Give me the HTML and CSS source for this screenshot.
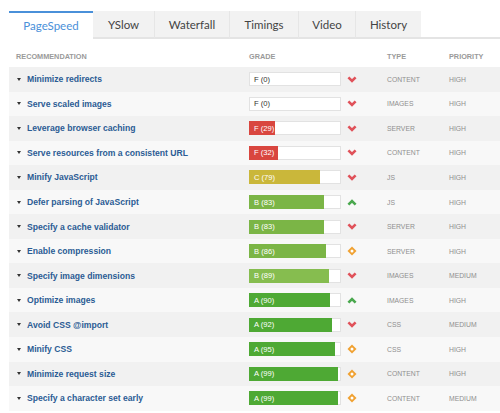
FILE: index.html
```html
<!DOCTYPE html>
<html>
<head>
<meta charset="utf-8">
<link rel="stylesheet" href="styles.css">
</head>
<body>
<div class="page">
  <div class="tabs">
    <div class="tab active" style="width:84px">PageSpeed</div>
    <div class="tab" style="width:61px">YSlow</div>
    <div class="tab" style="width:75px">Waterfall</div>
    <div class="tab" style="width:69px">Timings</div>
    <div class="tab" style="width:57px">Video</div>
    <div class="tab" style="width:66px">History</div>
    <div class="tab-fill"></div>
  </div>
  <div class="table">
    <div class="head">
      <div class="h h-rec">RECOMMENDATION</div>
      <div class="h">GRADE</div>
      <div class="h"></div>
      <div class="h">TYPE</div>
      <div class="h">PRIORITY</div>
    </div>

    <div class="row">
      <div class="name"><span class="tri"></span>Minimize redirects</div>
      <div class="grade"><div class="bar"><div class="fill" style="width:0%"></div><span class="gtext dark">F (0)</span></div></div>
      <div class="ic"><svg class="down" width="10" height="7" viewBox="0 0 10 7"><polyline points="1.4,1.4 5,5 8.6,1.4"/></svg></div>
      <div class="type">CONTENT</div>
      <div class="prio">HIGH</div>
    </div>
    <div class="row">
      <div class="name"><span class="tri"></span>Serve scaled images</div>
      <div class="grade"><div class="bar"><div class="fill" style="width:0%"></div><span class="gtext dark">F (0)</span></div></div>
      <div class="ic"><svg class="down" width="10" height="7" viewBox="0 0 10 7"><polyline points="1.4,1.4 5,5 8.6,1.4"/></svg></div>
      <div class="type">IMAGES</div>
      <div class="prio">HIGH</div>
    </div>
    <div class="row">
      <div class="name"><span class="tri"></span>Leverage browser caching</div>
      <div class="grade"><div class="bar"><div class="fill red" style="width:29%"></div><span class="gtext">F (29)</span></div></div>
      <div class="ic"><svg class="down" width="10" height="7" viewBox="0 0 10 7"><polyline points="1.4,1.4 5,5 8.6,1.4"/></svg></div>
      <div class="type">SERVER</div>
      <div class="prio">HIGH</div>
    </div>
    <div class="row">
      <div class="name"><span class="tri"></span>Serve resources from a consistent URL</div>
      <div class="grade"><div class="bar"><div class="fill red" style="width:32%"></div><span class="gtext">F (32)</span></div></div>
      <div class="ic"><svg class="down" width="10" height="7" viewBox="0 0 10 7"><polyline points="1.4,1.4 5,5 8.6,1.4"/></svg></div>
      <div class="type">CONTENT</div>
      <div class="prio">HIGH</div>
    </div>
    <div class="row">
      <div class="name"><span class="tri"></span>Minify JavaScript</div>
      <div class="grade"><div class="bar"><div class="fill yellow" style="width:79%"></div><span class="gtext">C (79)</span></div></div>
      <div class="ic"><svg class="down" width="10" height="7" viewBox="0 0 10 7"><polyline points="1.4,1.4 5,5 8.6,1.4"/></svg></div>
      <div class="type">JS</div>
      <div class="prio">HIGH</div>
    </div>
    <div class="row">
      <div class="name"><span class="tri"></span>Defer parsing of JavaScript</div>
      <div class="grade"><div class="bar"><div class="fill green-b" style="width:83%"></div><span class="gtext">B (83)</span></div></div>
      <div class="ic"><svg class="up" width="10" height="7" viewBox="0 0 10 7"><polyline points="1.4,5.6 5,2 8.6,5.6"/></svg></div>
      <div class="type">JS</div>
      <div class="prio">HIGH</div>
    </div>
    <div class="row">
      <div class="name"><span class="tri"></span>Specify a cache validator</div>
      <div class="grade"><div class="bar"><div class="fill green-b" style="width:83%"></div><span class="gtext">B (83)</span></div></div>
      <div class="ic"><svg class="down" width="10" height="7" viewBox="0 0 10 7"><polyline points="1.4,1.4 5,5 8.6,1.4"/></svg></div>
      <div class="type">SERVER</div>
      <div class="prio">HIGH</div>
    </div>
    <div class="row">
      <div class="name"><span class="tri"></span>Enable compression</div>
      <div class="grade"><div class="bar"><div class="fill green-b" style="width:86%"></div><span class="gtext">B (86)</span></div></div>
      <div class="ic"><svg class="dia" width="10" height="10" viewBox="0 0 10 10"><polygon points="5,0.5 9.5,5 5,9.5 0.5,5"/><circle cx="5" cy="5" r="1.5"/></svg></div>
      <div class="type">SERVER</div>
      <div class="prio">HIGH</div>
    </div>
    <div class="row">
      <div class="name"><span class="tri"></span>Specify image dimensions</div>
      <div class="grade"><div class="bar"><div class="fill green-b2" style="width:89%"></div><span class="gtext">B (89)</span></div></div>
      <div class="ic"><svg class="down" width="10" height="7" viewBox="0 0 10 7"><polyline points="1.4,1.4 5,5 8.6,1.4"/></svg></div>
      <div class="type">IMAGES</div>
      <div class="prio">MEDIUM</div>
    </div>
    <div class="row">
      <div class="name"><span class="tri"></span>Optimize images</div>
      <div class="grade"><div class="bar"><div class="fill green-a" style="width:90%"></div><span class="gtext">A (90)</span></div></div>
      <div class="ic"><svg class="up" width="10" height="7" viewBox="0 0 10 7"><polyline points="1.4,5.6 5,2 8.6,5.6"/></svg></div>
      <div class="type">IMAGES</div>
      <div class="prio">HIGH</div>
    </div>
    <div class="row">
      <div class="name"><span class="tri"></span>Avoid CSS @import</div>
      <div class="grade"><div class="bar"><div class="fill green-a" style="width:92%"></div><span class="gtext">A (92)</span></div></div>
      <div class="ic"><svg class="down" width="10" height="7" viewBox="0 0 10 7"><polyline points="1.4,1.4 5,5 8.6,1.4"/></svg></div>
      <div class="type">CSS</div>
      <div class="prio">MEDIUM</div>
    </div>
    <div class="row">
      <div class="name"><span class="tri"></span>Minify CSS</div>
      <div class="grade"><div class="bar"><div class="fill green-a" style="width:95%"></div><span class="gtext">A (95)</span></div></div>
      <div class="ic"><svg class="dia" width="10" height="10" viewBox="0 0 10 10"><polygon points="5,0.5 9.5,5 5,9.5 0.5,5"/><circle cx="5" cy="5" r="1.5"/></svg></div>
      <div class="type">CSS</div>
      <div class="prio">HIGH</div>
    </div>
    <div class="row">
      <div class="name"><span class="tri"></span>Minimize request size</div>
      <div class="grade"><div class="bar"><div class="fill green-a" style="width:99%"></div><span class="gtext">A (99)</span></div></div>
      <div class="ic"><svg class="dia" width="10" height="10" viewBox="0 0 10 10"><polygon points="5,0.5 9.5,5 5,9.5 0.5,5"/><circle cx="5" cy="5" r="1.5"/></svg></div>
      <div class="type">CONTENT</div>
      <div class="prio">HIGH</div>
    </div>
    <div class="row">
      <div class="name"><span class="tri"></span>Specify a character set early</div>
      <div class="grade"><div class="bar"><div class="fill green-a" style="width:99%"></div><span class="gtext">A (99)</span></div></div>
      <div class="ic"><svg class="dia" width="10" height="10" viewBox="0 0 10 10"><polygon points="5,0.5 9.5,5 5,9.5 0.5,5"/><circle cx="5" cy="5" r="1.5"/></svg></div>
      <div class="type">CONTENT</div>
      <div class="prio">MEDIUM</div>
    </div>
  </div>
</div>
</body>
</html>
```

FILE: styles.css
```css
html, body {
  margin: 0;
  padding: 0;
  background: #ffffff;
}
.page {
  padding: 11px 0 0 9px;
  font-family: "Liberation Sans", Arial, sans-serif;
}
.tabs {
  display: flex;
  height: 28px;
}
.tab {
  box-sizing: border-box;
  height: 28px;
  background: #f2f2f2;
  border-left: 1px solid #e6e6e6;
  border-bottom: 2px solid #e4e4e4;
  display: flex;
  align-items: center;
  justify-content: center;
  font-family: Lato, "Open Sans", sans-serif;
  font-size: 11.5px;
  color: #444444;
}
.tab.active {
  background: #ffffff;
  border-left: none;
  border-top: 2px solid #4a90d9;
  border-bottom: 2px solid #ffffff;
  color: #4a90d9;
}
.tab.active + .tab {
  border-left: none;
}
.tab-fill {
  flex: 1;
  border-bottom: 2px solid #e4e4e4;
}
.head, .row {
  display: grid;
  grid-template-columns: 240px 98px 40px 62px 1fr;
  align-items: center;
}
.head {
  padding: 13px 0 5px;
  line-height: 10px;
}
.h {
  font-size: 7.3px;
  font-weight: bold;
  color: #9a9a9a;
}
.h-rec {
  padding-left: 7px;
}
.row {
  height: 24.55px;
  background: #f1f1f1;
}
.row:nth-child(odd) {
  background: #f8f8f8;
}
.name {
  display: flex;
  align-items: center;
  padding-left: 8px;
  font-size: 8.6px;
  font-weight: bold;
  color: #2b5c94;
  white-space: nowrap;
}
.tri {
  width: 0;
  height: 0;
  border-left: 2px solid transparent;
  border-right: 2px solid transparent;
  border-top: 3px solid #333333;
  margin-right: 6px;
}
.bar {
  position: relative;
  box-sizing: border-box;
  width: 92px;
  height: 14px;
  background: #ffffff;
  border: 1px solid #e2e2e2;
  display: flex;
  align-items: center;
}
.fill {
  position: absolute;
  left: -1px;
  top: -1px;
  bottom: -1px;
}
.fill.red { background: #d9463f; }
.fill.yellow { background: #cab73a; }
.fill.green-b { background: #7bb546; }
.fill.green-b2 { background: #86bd4f; }
.fill.green-a { background: #4ea934; }
.gtext {
  position: relative;
  padding-left: 4px;
  font-size: 7.6px;
  color: #ffffff;
}
.gtext.dark {
  color: #333333;
}
.ic {
  display: flex;
  align-items: center;
}
.ic svg {
  display: block;
}
.down polyline {
  fill: none;
  stroke: #e0525a;
  stroke-width: 2.6;
}
.up polyline {
  fill: none;
  stroke: #4aa84e;
  stroke-width: 2.6;
}
.dia polygon {
  fill: #f0a131;
}
.dia circle {
  fill: #ffffff;
}
.type, .prio {
  font-size: 6.8px;
  color: #8f8f8f;
}
```
